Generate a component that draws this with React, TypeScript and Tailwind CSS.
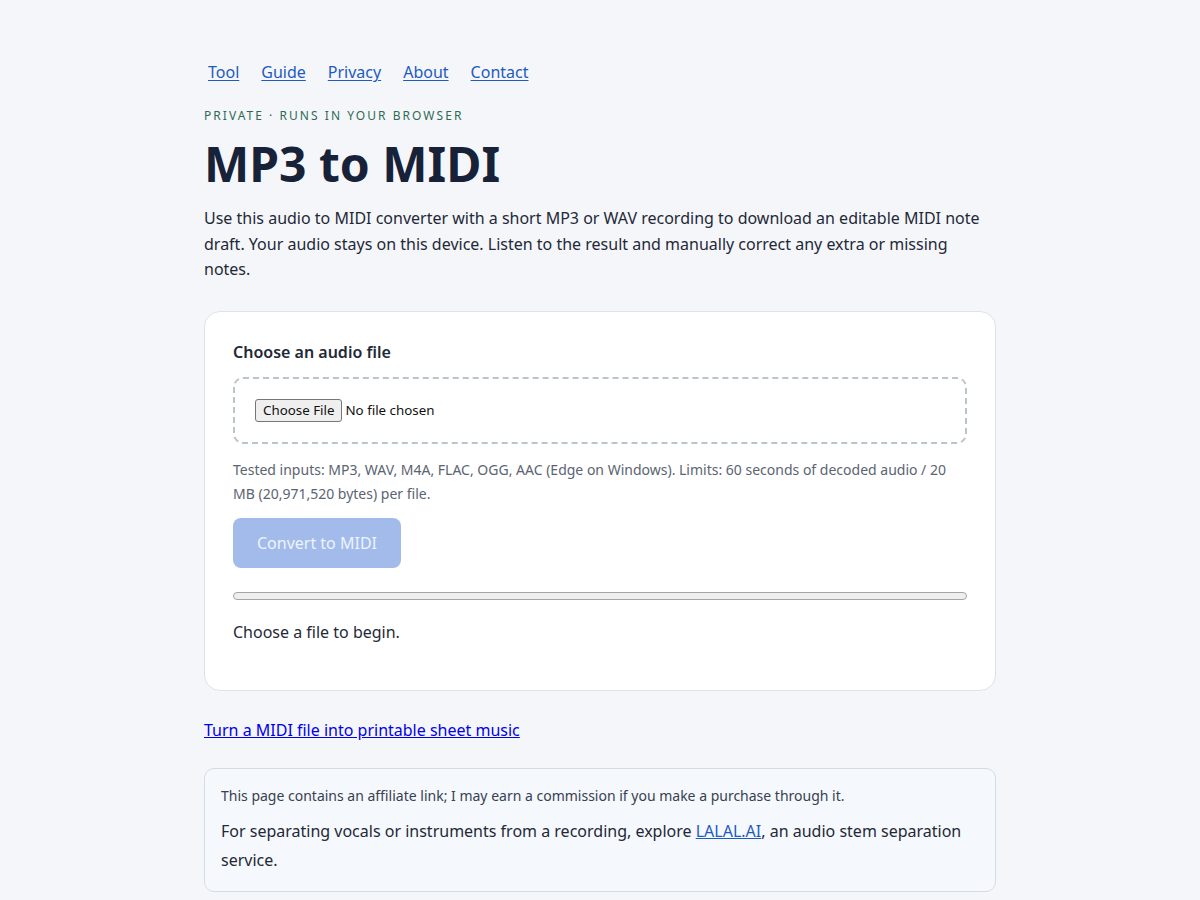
import React from "react";

export default function App() {
  return (
    <div className="min-h-[900px] bg-[#f4f6fa] text-[#1f2937] font-['Noto_Sans',sans-serif]">
      <div className="mx-auto w-[792px] pt-[58px] pb-10">
        <nav className="flex gap-[14px] text-[16px] leading-[28px]">
          {["Tool", "Guide", "Privacy", "About", "Contact"].map((l) => (
            <a key={l} href="#" className="px-1 text-[#1d5bbf] underline underline-offset-2">
              {l}
            </a>
          ))}
        </nav>
        <p className="mt-[22px] text-[12px] leading-[16px] tracking-[0.17em] uppercase text-[#2f6b52]">
          Private · Runs in your browser
        </p>
        <h1 className="mt-[11px] text-[48px] leading-[58px] font-bold text-[#172238]">MP3 to MIDI</h1>
        <p className="mt-[13px] text-[16px] leading-[25.6px] text-[#1f2937]">
          Use this audio to MIDI converter with a short MP3 or WAV recording to download an editable MIDI note draft.
          Your audio stays on this device. Listen to the result and manually correct any extra or missing notes.
        </p>
        <section className="mt-[28px] rounded-[16px] border border-[#dde3ea] bg-white px-[28px] pt-[28px] pb-[46px]">
          <label className="block text-[16px] leading-[24px] font-semibold text-[#1f2937]">Choose an audio file</label>
          <div className="mt-[13px] rounded-[10px] border-2 border-dashed border-[#b9c4cc] px-5 py-[20px]">
            <input
              type="file"
              className="block h-[23px] text-[13.33px] leading-[21px] font-['Noto_Sans',sans-serif] text-[#111] file:mr-[3px] file:h-[23px] file:rounded-[3px] file:border file:border-solid file:border-[#767676] file:bg-[#efefef] file:px-[7px] file:text-[13.33px] file:text-[#111] file:font-['Noto_Sans',sans-serif]"
            />
          </div>
          <p className="mt-[14px] text-[14px] leading-[24px] text-[#5b6472]">
            Tested inputs: MP3, WAV, M4A, FLAC, OGG, AAC (Edge on Windows). Limits: 60 seconds of decoded audio / 20
            MB (20,971,520 bytes) per file.
          </p>
          <button
            disabled
            className="mt-[12px] h-[50px] w-[168px] rounded-[8px] bg-[#a2bbeb] text-[16px] text-[#eef3fc]"
          >
            Convert to MIDI
          </button>
          <div className="mt-[24px] h-[8px] w-full rounded-full border border-[#a5a5a5] bg-[#efefef]" />
          <p className="mt-[20px] text-[16px] leading-[24px] text-[#1f2937]">Choose a file to begin.</p>
        </section>
        <p className="mt-[27px] text-[16px] leading-[24px]">
          <a href="#" className="text-[#0000ee] underline">
            Turn a MIDI file into printable sheet music
          </a>
        </p>
        <aside className="mt-[26px] rounded-[10px] border border-[#d5dce5] bg-[#f5f8fc] px-4 py-[16px]">
          <p className="text-[14px] leading-[22px] text-[#374151]">
            This page contains an affiliate link; I may earn a commission if you make a purchase through it.
          </p>
          <p className="mt-[10px] text-[16px] leading-[29px] text-[#1f2937]">
            For separating vocals or instruments from a recording, explore{" "}
            <a href="#" className="text-[#1d5bbf] underline">
              LALAL.AI
            </a>
            , an audio stem separation service.
          </p>
        </aside>
      </div>
    </div>
  );
}
